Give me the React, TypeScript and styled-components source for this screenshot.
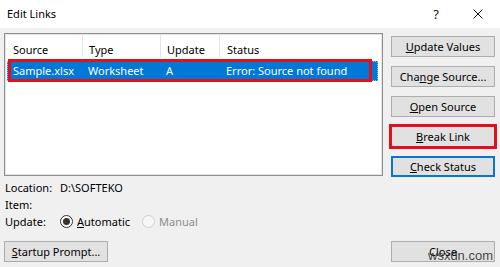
import React from "react";
import styled, { createGlobalStyle } from "styled-components";

const GlobalStyle = createGlobalStyle`
  html, body {
    margin: 0;
    padding: 0;
    background: #f0f0f0;
  }
  body {
    font-family: "Noto Sans", "Open Sans", sans-serif;
    font-size: 11px;
    color: #000;
  }
`;

const Dialog = styled.div`
  position: relative;
  width: 500px;
  height: 267px;
  overflow: hidden;
  background: #f0f0f0;
  display: flex;
  flex-direction: column;
`;

const TitleBar = styled.div`
  height: 28px;
  flex: none;
  background: #fff;
  display: flex;
  align-items: center;
  padding-left: 7px;
`;

const Title = styled.div`
  flex: 1;
  font-size: 11px;
  line-height: 16px;
`;

const TitleButton = styled.div<{ $w: number }>`
  width: ${(p) => p.$w}px;
  height: 28px;
  display: flex;
  align-items: center;
  justify-content: center;
  font-size: 13px;
  color: #111;
`;

const Main = styled.div`
  padding: 5px 5px 0 4px;
  display: flex;
  flex-direction: column;
`;

const TopRow = styled.div`
  display: flex;
  align-items: flex-start;
`;

const ListBox = styled.div`
  position: relative;
  width: 379px;
  height: 143px;
  box-sizing: border-box;
  border: 1px solid #8f8f8f;
  padding: 1px;
  background: #fff;
  box-shadow: inset 0 0 0 1px #e3e3e3;
`;

const HeaderRow = styled.div`
  display: flex;
  height: 22px;
  background: #fff;
`;

const HeaderCell = styled.div<{ $w?: number; $pad?: number }>`
  ${(p) => (p.$w ? `width: ${p.$w}px; flex: none;` : "flex: 1;")}
  box-sizing: border-box;
  padding: 7px 0 0 ${(p) => p.$pad ?? 6}px;
  line-height: 15px;
  border-right: ${(p) => (p.$w ? "1px solid #e5e5e5" : "none")};
  white-space: nowrap;
`;

const SelectedRow = styled.div`
  display: flex;
  height: 20px;
  margin: 4px 3px 0 1px;
  background: #0078d7;
  color: #fff;
  box-sizing: border-box;
  border: 1px dotted rgba(255, 255, 255, 0.55);
`;

const RowCell = styled.div<{ $w?: number }>`
  ${(p) => (p.$w ? `width: ${p.$w}px; flex: none;` : "flex: 1;")}
  box-sizing: border-box;
  padding-left: 5px;
  line-height: 18px;
  white-space: nowrap;
`;

const Annotation = styled.div`
  position: absolute;
  left: 3px;
  top: 25px;
  width: 364px;
  height: 23px;
  box-sizing: border-box;
  border: 3px solid #e2101c;
  pointer-events: none;
`;

const ButtonColumn = styled.div`
  display: flex;
  flex-direction: column;
  gap: 9px;
  margin-left: 8px;
  padding-top: 3px;
`;

const Button = styled.div<{ $variant?: "marked" | "focus" }>`
  width: 104px;
  height: 21px;
  box-sizing: border-box;
  border: ${(p) => (p.$variant === "focus" ? "2px solid #0a74cf" : "1px solid #adadad")};
  background: #e1e1e1;
  display: flex;
  align-items: center;
  justify-content: center;
  line-height: 15px;
  ${(p) => (p.$variant === "marked" ? "outline: 3px solid #e2101c; outline-offset: -1px;" : "")}
`;

const Key = styled.span`
  text-decoration: underline;
  text-underline-offset: 1px;
`;

const Info = styled.div`
  margin-top: 2px;
  padding-left: 1px;
  display: flex;
  flex-direction: column;
`;

const InfoLine = styled.div`
  display: flex;
  align-items: center;
  height: 17px;
  line-height: 17px;
`;

const Label = styled.div`
  width: 55px;
  flex: none;
`;

const RadioOption = styled.div<{ $disabled?: boolean }>`
  display: flex;
  align-items: center;
  margin-right: 12px;
  color: ${(p) => (p.$disabled ? "#8d8d8d" : "#000")};
`;

const RadioCircle = styled.span<{ $checked?: boolean; $disabled?: boolean }>`
  width: 13px;
  height: 13px;
  box-sizing: border-box;
  border-radius: 50%;
  border: 1px solid ${(p) => (p.$disabled ? "#cfcfcf" : "#333")};
  background: ${(p) => (p.$disabled ? "#f7f7f7" : "#fff")};
  margin-right: 4px;
  display: flex;
  align-items: center;
  justify-content: center;
  &::after {
    content: "";
    display: ${(p) => (p.$checked ? "block" : "none")};
    width: 7px;
    height: 7px;
    border-radius: 50%;
    background: #333;
  }
`;

const BottomRow = styled.div`
  display: flex;
  justify-content: space-between;
  margin-top: 11px;
`;

const Watermark = styled.div`
  position: absolute;
  left: 428px;
  top: 248px;
  font-family: "Liberation Sans", Arial, sans-serif;
  font-size: 13px;
  line-height: 15px;
  color: rgba(30, 30, 30, 0.85);
  pointer-events: none;
`;

export default function App() {
  return (
    <>
      <GlobalStyle />
      <Dialog>
        <TitleBar>
          <Title>Edit Links</Title>
          <TitleButton $w={40}>?</TitleButton>
          <TitleButton $w={44}>
            <svg width="10" height="10" viewBox="0 0 10 10">
              <path d="M0.5 0.5 L9.5 9.5 M9.5 0.5 L0.5 9.5" stroke="#111" strokeWidth="1" fill="none" />
            </svg>
          </TitleButton>
        </TitleBar>
        <Main>
          <TopRow>
            <ListBox>
              <HeaderRow>
                <HeaderCell $w={77} $pad={7}>Source</HeaderCell>
                <HeaderCell $w={78}>Type</HeaderCell>
                <HeaderCell $w={59}>Update</HeaderCell>
                <HeaderCell $pad={7}>Status</HeaderCell>
              </HeaderRow>
              <SelectedRow>
                <RowCell $w={75}>Sample.xlsx</RowCell>
                <RowCell $w={78}>Worksheet</RowCell>
                <RowCell $w={60}>A</RowCell>
                <RowCell>Error: Source not found</RowCell>
              </SelectedRow>
              <Annotation />
            </ListBox>
            <ButtonColumn>
              <Button><span><Key>U</Key>pdate Values</span></Button>
              <Button><span>Cha<Key>n</Key>ge Source...</span></Button>
              <Button><span><Key>O</Key>pen Source</span></Button>
              <Button $variant="marked"><span><Key>B</Key>reak Link</span></Button>
              <Button $variant="focus"><span><Key>C</Key>heck Status</span></Button>
            </ButtonColumn>
          </TopRow>
          <Info>
            <InfoLine>
              <Label>Location:</Label>
              <span>D:\SOFTEKO</span>
            </InfoLine>
            <InfoLine>
              <Label>Item:</Label>
            </InfoLine>
            <InfoLine>
              <Label>Update:</Label>
              <RadioOption>
                <RadioCircle $checked />
                <span><Key>A</Key>utomatic</span>
              </RadioOption>
              <RadioOption $disabled>
                <RadioCircle $disabled />
                <span>Manual</span>
              </RadioOption>
            </InfoLine>
          </Info>
          <BottomRow>
            <Button><span><Key>S</Key>tartup Prompt...</span></Button>
            <Button><span>Close</span></Button>
          </BottomRow>
        </Main>
        <Watermark>wsxdn.com</Watermark>
      </Dialog>
    </>
  );
}
